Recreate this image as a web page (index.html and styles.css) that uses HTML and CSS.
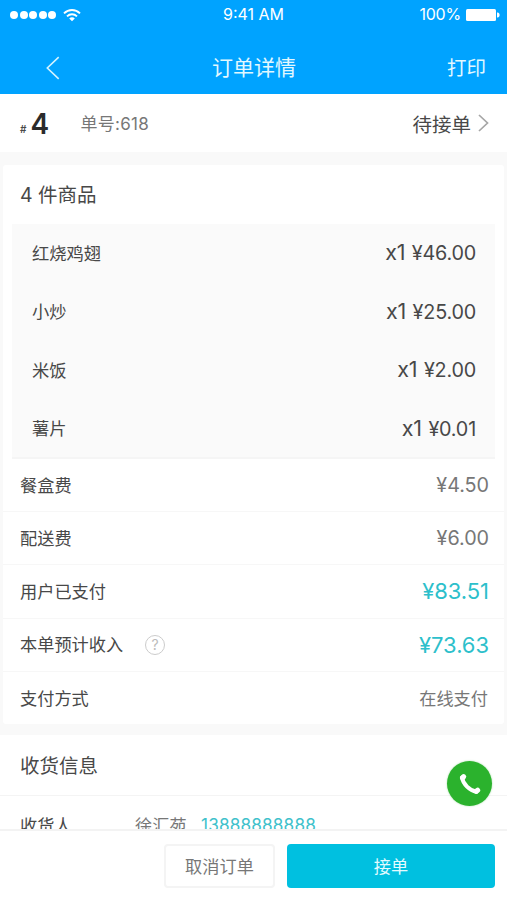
FILE: index.html
```html
<!DOCTYPE html>
<html lang="zh-CN">
<head>
<meta charset="utf-8">
<meta name="viewport" content="width=device-width, initial-scale=1">
<title>订单详情</title>
<link rel="stylesheet" href="styles.css">
</head>
<body>
<div class="app">
  <header class="header">
    <div class="status">
      <div class="signal">
        <i class="dot"></i><i class="dot"></i><i class="dot"></i><i class="dot"></i><i class="dot"></i>
        <svg class="wifi" viewBox="0 0 18 14" width="18" height="14" fill="none" stroke="#fff" stroke-width="1.9"><path d="M1 5.4C5.6 .9 12.4 .9 17 5.4"/><path d="M4 8.4C6.9 5.6 11.1 5.6 14 8.4"/><path d="M6.2 10.4C7.8 9 10.2 9 11.8 10.4L9 13.2Z" fill="#fff" stroke="none"/></svg>
      </div>
      <span class="time">9:41 AM</span>
      <div class="power">
        <span class="percent">100%</span>
        <svg viewBox="0 0 34 14" width="34" height="14" fill="#fff"><rect x="0" y="1" width="30" height="12" rx="1.5"/><path d="M31 4.5h.6c1.2 0 2 1 2 2.500s-.8 2.500-2 2.500H31z"/></svg>
      </div>
    </div>
    <nav class="nav">
      <svg class="back" viewBox="0 0 14 24" width="14" height="24" fill="none" stroke="#d3f3ff" stroke-width="1.600"><path d="M12.700 1.200L1.300 12L12.700 22.800"/></svg>
      <h1 class="title">订单详情</h1>
      <span class="print">打印</span>
    </nav>
  </header>

  <main class="content">
    <section class="order">
      <span class="hash">#</span><span class="seq">4</span>
      <span class="number">单号:618</span>
      <span class="state">待接单</span>
      <svg class="more" viewBox="0 0 11 18" width="11" height="18" fill="none" stroke="#a6a6a6" stroke-width="1.700"><path d="M1 1L9.500 9L1 17"/></svg>
    </section>

    <section class="card">
      <h2 class="heading goods">4 件商品</h2>
      <div class="items">
        <div class="item"><span>红烧鸡翅</span><span class="cost"><span class="qty">x1</span>¥46.00</span></div>
        <div class="item"><span>小炒</span><span class="cost"><span class="qty">x1</span>¥25.00</span></div>
        <div class="item"><span>米饭</span><span class="cost"><span class="qty">x1</span>¥2.00</span></div>
        <div class="item"><span>薯片</span><span class="cost"><span class="qty">x1</span>¥0.01</span></div>
      </div>
      <div class="row"><span>餐盒费</span><span class="fee">¥4.50</span></div>
      <div class="row"><span>配送费</span><span class="fee">¥6.00</span></div>
      <div class="row"><span>用户已支付</span><span class="fee total">¥83.51</span></div>
      <div class="row"><span>本单预计收入</span><span class="help">?</span><span class="fee total">¥73.63</span></div>
      <div class="row"><span>支付方式</span><span class="method">在线支付</span></div>
    </section>

    <section class="delivery">
      <h2 class="heading info">收货信息</h2>
      <div class="receiver"><span class="label">收货人</span><span class="name">徐汇苑</span><span class="phone">13888888888</span></div>
    </section>
  </main>

  <footer class="footer">
    <button class="btn cancel">取消订单</button>
    <button class="btn accept">接单</button>
  </footer>

  <div class="call">
    <svg viewBox="0 0 24 24" width="24" height="24" fill="none" stroke="#fff" stroke-linecap="round"><path stroke-width="4" d="M4 5.500C5 12 11.500 18.500 18.500 19.800"/><path stroke-width="5.200" d="M4.600 5.800L5.600 4.700M18.300 19.300L19.600 18.300"/></svg>
  </div>
</div>
</body>
</html>
```

FILE: styles.css
```css
* { box-sizing: border-box; }
body {
  margin: 0;
  font-family: Inter, "Noto Sans CJK SC", sans-serif;
  color: #484848;
  background: #fff;
}
h1, h2 { margin: 0; font-weight: 400; }
svg { display: block; flex: none; }

.app {
  position: relative;
  display: flex;
  flex-direction: column;
  height: 900px;
  overflow: hidden;
}

.header { flex: none; height: 94px; background: #00a3ff; color: #fff; }
.status {
  display: grid;
  grid-template-columns: 1fr auto 1fr;
  align-items: center;
  height: 29px;
  padding: 0 7px 0 10px;
  font-size: 16px;
}
.time { margin: -1px 3px 0 0; }
.percent { margin-top: -1px; letter-spacing: -0.200px; }
.signal { display: flex; align-items: center; gap: 1.500px; }
.dot { width: 8px; height: 8px; border-radius: 50%; background: #fff; }
.wifi { margin-left: 5px; }
.power { display: flex; align-items: center; justify-content: flex-end; gap: 5px; }
.nav {
  display: grid;
  grid-template-columns: 166px auto 1fr;
  align-items: center;
  height: 65px;
  padding: 12px 21px 0 46px;
  color: #e2f8ff;
}
.title { font-size: 21px; line-height: 30px; }
.print { font-size: 19.500px; line-height: 30px; text-align: right; }

.content { flex: 1; min-height: 0; overflow: hidden; background: #f9f9f9; }
.order {
  display: flex;
  align-items: center;
  height: 58px;
  padding: 0 18px 0 20px;
  background: #fff;
}
.hash { font-size: 10px; font-weight: 600; margin: 11px 4px 0 0; }
.seq { width: 19px; font-size: 28px; font-weight: 600; color: #2b2b2b; margin-top: 2px; }
.number { margin: -2px 0 0 31px; font-size: 17px; letter-spacing: 0.300px; color: #777; }
.state { margin-left: auto; font-size: 19.500px; }
.more { margin-left: 7px; }

.card { margin: 13px 3px 0; height: 559px; background: #fff; border-radius: 3px; }
.heading { font-size: 19.500px; padding-left: 17px; }
.goods { height: 59px; line-height: 61px; }
.items {
  height: 235px;
  margin: 0 9px;
  padding: 0 19px 0 20px;
  background: #fafafa;
  border-bottom: 2px solid #f5f5f5;
}
.item {
  display: flex;
  align-items: center;
  justify-content: space-between;
  height: 58.500px;
  padding-bottom: 2px;
  font-size: 17.300px;
}
.cost { font-size: 19.800px; letter-spacing: -0.200px; }
.qty { font-size: 21.500px; margin-right: 6.500px; }
.row {
  display: flex;
  align-items: center;
  height: 53.200px;
  padding: 0 15px 2px 17px;
  font-size: 17.200px;
  border-bottom: 1px solid #f7f7f7;
}
.row:last-child { border-bottom: 0; }
.fee, .method { margin-left: auto; color: #777; }
.method { margin-right: 1px; }
.fee { padding-top: 1px; font-size: 19.800px; letter-spacing: -0.050px; }
.fee.total { padding-top: 2px; font-size: 22px; color: #2dbfcb; }
.help {
  display: flex;
  align-items: center;
  justify-content: center;
  width: 20px;
  height: 20px;
  margin: 2px 0 0 22px;
  border: 1.500px solid #ccc;
  border-radius: 50%;
  font-size: 14px;
  color: #bbb;
}

.delivery { margin-top: 11px; height: 110px; background: #fff; }
.info { height: 61px; line-height: 63px; padding-left: 20px; border-bottom: 1px solid #f4f4f4; }
.receiver {
  display: flex;
  align-items: center;
  height: 56px;
  padding-left: 20px;
  font-size: 17.200px;
}
.label { width: 115px; }
.name { width: 66px; color: #777; }
.phone { color: #40c1cb; letter-spacing: 0.150px; padding-top: 1px; }

.footer {
  flex: none;
  display: flex;
  gap: 12px;
  height: 71px;
  padding: 13px 12px 0 164px;
  background: #fff;
  border-top: 2px solid #f3f3f3;
}
.btn {
  height: 44px;
  padding: 0 0 2px;
  font-family: inherit;
  font-size: 17.200px;
  border-radius: 4px;
}
.cancel { width: 111px; color: #777; background: #fff; border: 2px solid #f4f4f4; }
.accept { flex: 1; color: #e4fbff; background: #00c0e0; border: 0; }

.call {
  position: absolute;
  left: 447px;
  top: 761px;
  display: flex;
  align-items: center;
  justify-content: center;
  width: 45px;
  height: 45px;
  border-radius: 50%;
  background: #2bb22d;
  box-shadow: 0 0 2px #a4daa4;
}
```
